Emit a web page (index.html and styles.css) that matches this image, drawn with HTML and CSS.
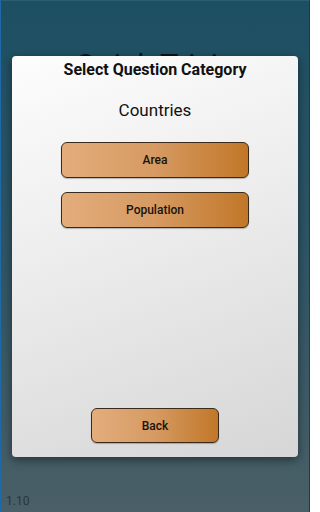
FILE: index.html
```html
<!DOCTYPE html>
<html>
<head>
<meta charset="utf-8">
<link rel="stylesheet" href="styles.css">
</head>
<body>
<div class="screen">
  <h1 class="app-title">Quick Trivia</h1>
  <div class="version">1.10</div>
  <div class="dialog">
    <div class="dialog-title">Select Question Category</div>
    <div class="category">Countries</div>
    <div class="options">
      <button class="btn btn-wide">Area</button>
      <button class="btn btn-wide">Population</button>
    </div>
    <button class="btn btn-back">Back</button>
  </div>
</div>
</body>
</html>
```
FILE: styles.css
```css
html, body {
  margin: 0;
  padding: 0;
}
body {
  width: 310px;
  height: 512px;
  overflow: hidden;
  font-family: Roboto, "Liberation Sans", sans-serif;
}
.screen {
  position: relative;
  box-sizing: border-box;
  width: 310px;
  height: 512px;
  display: flex;
  flex-direction: column;
  background: linear-gradient(to bottom, #1d4f63 0%, #2f5565 50%, #4a5f67 100%);
  border-left: 1px solid #1e6aa8;
  border-right: 1px solid #1d3b47;
  border-top: 1px solid #2a5d72;
}
.app-title {
  margin: 47px 0 0 0;
  font-size: 31px;
  font-weight: 400;
  line-height: 36px;
  text-align: center;
  color: #08141a;
}
.version {
  margin-top: auto;
  margin-left: 5px;
  margin-bottom: 4px;
  font-size: 12px;
  line-height: 14px;
  color: #28363d;
}
.dialog {
  position: absolute;
  left: 11px;
  top: 55px;
  width: 286px;
  height: 401px;
  box-sizing: border-box;
  border-radius: 4px;
  background: linear-gradient(160deg, #fdfdfd 0%, #ececec 45%, #d6d6d6 100%);
  box-shadow: 0 3px 10px rgba(0, 0, 0, 0.45);
  display: flex;
  flex-direction: column;
  align-items: center;
  padding: 5px 0 14px 0;
}
.dialog-title {
  font-size: 16px;
  font-weight: 700;
  line-height: 18px;
  color: #111;
}
.category {
  margin-top: 21px;
  font-size: 17px;
  line-height: 20px;
  color: #111;
}
.options {
  margin-top: 22px;
  display: flex;
  flex-direction: column;
  gap: 14px;
}
.btn {
  box-sizing: border-box;
  height: 36px;
  border: 1px solid #3a2a1c;
  border-radius: 6px;
  background: linear-gradient(to right, #e3ad7c 0%, #d69a62 50%, #c17728 100%);
  font-family: Roboto, "Liberation Sans", sans-serif;
  font-size: 12px;
  font-weight: 500;
  color: #1a120c;
  padding: 0;
  box-shadow: 0 1px 1px rgba(0,0,0,0.25);
}
.btn-wide {
  width: 188px;
}
.btn-back {
  margin-top: auto;
  width: 128px;
  height: 35px;
}
```
